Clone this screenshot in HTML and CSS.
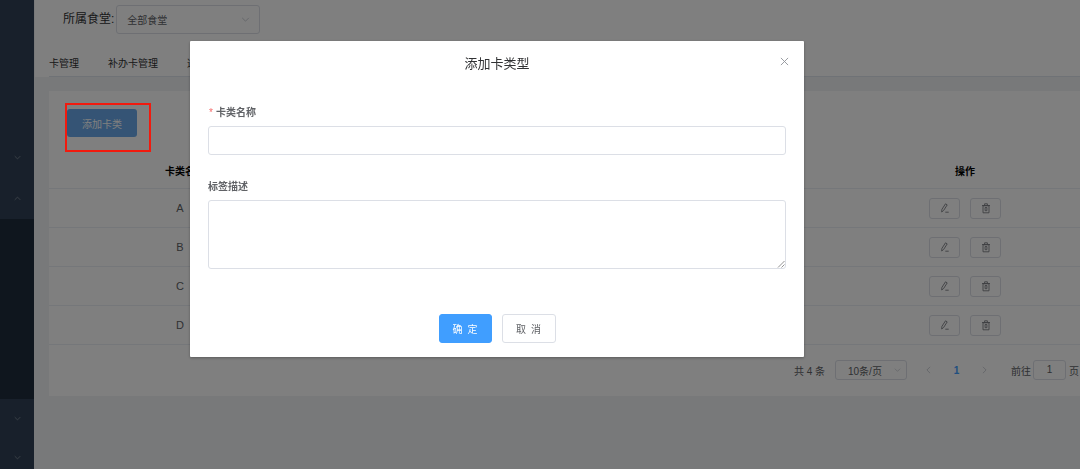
FILE: index.html
```html
<!DOCTYPE html>
<html lang="zh-CN">
<head>
<meta charset="utf-8">
<title>添加卡类型</title>
<link rel="stylesheet" href="styles.css">
</head>
<body>
<div class="app">
  <aside class="sidebar">
    <div class="menu-item tall"><svg class="chev" viewBox="0 0 10 6"><path d="M1 1l4 4 4-4"/></svg></div>
    <div class="menu-item tall"><svg class="chev" viewBox="0 0 10 6"><path d="M1 5l4-4 4 4"/></svg></div>
    <div class="submenu"></div>
    <div class="menu-item"><svg class="chev" viewBox="0 0 10 6"><path d="M1 1l4 4 4-4"/></svg></div>
    <div class="menu-item"><svg class="chev" viewBox="0 0 10 6"><path d="M1 1l4 4 4-4"/></svg></div>
  </aside>
  <main class="main">
    <div class="filter">
      <span class="filter-label">所属食堂:</span>
      <div class="select filter-select"><span>全部食堂</span><svg class="chev-sm" viewBox="0 0 10 6"><path d="M1 1l4 4 4-4"/></svg></div>
    </div>
    <div class="tabs-wrap">
      <nav class="tabs">
        <span class="tab">卡管理</span>
        <span class="tab">补办卡管理</span>
        <span class="tab">适用范围</span>
      </nav>
    </div>
    <section class="card">
      <div class="toolbar"><button class="btn-add">添加卡类</button></div>
      <div class="row head"><div>卡类名</div><div></div><div>操作</div></div>
      <div class="row"><div>A</div><div></div><div class="ops">
        <span class="op"><svg viewBox="0 0 12 12"><path d="M2.700 10l.2-2.600 3.600-5.600 1.700 1.100-3.600 5.600zM6.300 10.200h3.400"/></svg></span>
        <span class="op"><svg viewBox="0 0 12 12"><path d="M3 3.800h6v7H3zM2 3.500h8M4.600 3.500V1.800h2.800v1.700M5.100 5.500h1.800v3.200H5.100z"/></svg></span>
      </div></div>
      <div class="row"><div>B</div><div></div><div class="ops">
        <span class="op"><svg viewBox="0 0 12 12"><path d="M2.700 10l.2-2.600 3.600-5.600 1.700 1.100-3.600 5.600zM6.300 10.200h3.400"/></svg></span>
        <span class="op"><svg viewBox="0 0 12 12"><path d="M3 3.800h6v7H3zM2 3.500h8M4.600 3.500V1.800h2.800v1.700M5.100 5.500h1.800v3.200H5.100z"/></svg></span>
      </div></div>
      <div class="row"><div>C</div><div></div><div class="ops">
        <span class="op"><svg viewBox="0 0 12 12"><path d="M2.700 10l.2-2.600 3.600-5.600 1.700 1.100-3.600 5.600zM6.300 10.200h3.400"/></svg></span>
        <span class="op"><svg viewBox="0 0 12 12"><path d="M3 3.800h6v7H3zM2 3.500h8M4.600 3.500V1.800h2.800v1.700M5.100 5.500h1.800v3.200H5.100z"/></svg></span>
      </div></div>
      <div class="row"><div>D</div><div></div><div class="ops">
        <span class="op"><svg viewBox="0 0 12 12"><path d="M2.700 10l.2-2.600 3.600-5.600 1.700 1.100-3.600 5.600zM6.300 10.200h3.400"/></svg></span>
        <span class="op"><svg viewBox="0 0 12 12"><path d="M3 3.800h6v7H3zM2 3.500h8M4.600 3.500V1.800h2.800v1.700M5.100 5.500h1.800v3.200H5.100z"/></svg></span>
      </div></div>
      <div class="pager">
        <span class="total">共 4 条</span>
        <div class="select size-select"><span>10条/页</span><svg class="chev-sm" viewBox="0 0 10 6"><path d="M1 1l4 4 4-4"/></svg></div>
        <svg class="arrow" viewBox="0 0 6 10"><path d="M5 1L1 5l4 4"/></svg>
        <span class="page-num">1</span>
        <svg class="arrow" viewBox="0 0 6 10"><path d="M1 1l4 4-4 4"/></svg>
        <span class="goto">前往</span>
        <span class="goto-input">1</span>
        <span class="goto-end">页</span>
      </div>
    </section>
  </main>
</div>

<div class="overlay"></div>
<div class="annotation"></div>

<div class="dialog">
  <header class="dialog-head">
    <span class="dialog-title">添加卡类型</span>
    <svg class="close" viewBox="0 0 10 10"><path d="M1 1l8 8M9 1L1 9"/></svg>
  </header>
  <form class="dialog-body">
    <label class="label"><span class="star">*</span>卡类名称</label>
    <div class="input"></div>
    <label class="label second">标签描述</label>
    <div class="textarea">
      <svg class="grip" viewBox="0 0 8 8"><path d="M1 7.500L7.500 1M4.500 7.500l3-3"/></svg>
    </div>
  </form>
  <footer class="dialog-foot">
    <button class="btn primary">确 定</button>
    <button class="btn plain">取 消</button>
  </footer>
</div>
</body>
</html>
```

FILE: styles.css
```css
* { box-sizing: border-box; }
html, body { margin: 0; height: 100%; overflow: hidden; }
body {
  font-family: "Liberation Sans", "Noto Sans CJK SC", sans-serif;
  font-size: 10px;
  color: #606266;
  background: #f0f2f5;
}
.app { display: flex; height: 469px; }

.sidebar {
  width: 34px;
  flex: none;
  background: #304156;
  padding-top: 137px;
  display: flex;
  flex-direction: column;
  overflow: hidden;
}
.menu-item { height: 39px; flex: none; display: flex; align-items: center; justify-content: center; }
.menu-item.tall { height: 41px; }
.submenu { height: 180px; flex: none; background: #1f2d3d; }
.chev { width: 7px; height: 5px; fill: none; stroke: #8f98a3; stroke-width: 1; }

.main { flex: 1; min-width: 0; margin-left: 1px; }
.filter {
  height: 40px;
  background: #fff;
  display: flex;
  align-items: flex-start;
  padding: 5px 0 0 28px;
  gap: 2px;
}
.filter-label { font-size: 12px; line-height: 29px; color: #303133; }
.select {
  display: flex;
  align-items: center;
  justify-content: space-between;
  border: 1px solid #dcdfe6;
  border-radius: 3px;
  color: #606266;
  background: #fff;
}
.filter-select { width: 144px; height: 29px; padding: 0 9px 0 10px; }
.chev-sm { width: 9px; height: 5px; fill: none; stroke: #c0c4cc; stroke-width: 1; }

.tabs-wrap { background: #fff; padding-left: 14px; }
.tabs {
  height: 37px;
  display: flex;
  gap: 29px;
  padding-top: 15px;
  line-height: 17px;
  color: #303133;
  border-bottom: 1px solid #dfe4ed;
}
.tab { white-space: nowrap; }

.card { margin: 14px 0 0 14px; height: 305px; background: #fff; }
.toolbar { height: 60px; padding: 18px 0 0 18px; }
.btn-add {
  display: block;
  width: 70px;
  height: 28px;
  border: 0;
  border-radius: 3px;
  background: #6aa9ea;
  color: #fff;
  font: inherit;
  padding: 0;
}
.row {
  display: grid;
  grid-template-columns: 262px 1fr 230px;
  height: 39px;
  align-items: center;
  text-align: center;
  border-bottom: 1px solid #ebeef5;
}
.row > div { font-size: 11px; }
.row.head { height: 38px; padding-top: 2px; color: #000; font-weight: 700; }
.row.head > div { font-size: 10px; }
.ops { display: flex; justify-content: center; gap: 10px; }
.op {
  width: 31px;
  height: 21px;
  border: 1px solid #dcdfe6;
  border-radius: 3px;
  display: flex;
  align-items: center;
  justify-content: center;
}
.op svg { width: 12px; height: 12px; fill: none; stroke: #7d7f85; stroke-width: .9; }

.pager { display: flex; align-items: center; padding: 15px 0 0 745px; height: 35px; }
.total { width: 41px; white-space: nowrap; }
.size-select { width: 72px; height: 20px; padding: 0 5px 0 12px; }
.size-select .chev-sm { width: 7px; height: 4px; }
.arrow { width: 5px; height: 8px; fill: none; stroke: #c0c4cc; stroke-width: 1; }
.size-select + .arrow { margin-left: 19px; }
.page-num { width: 51px; text-align: center; color: #409eff; font-weight: 700; }
.goto { margin-left: 24px; white-space: nowrap; }
.goto-input {
  width: 33px;
  height: 20px;
  margin-left: 2px;
  border: 1px solid #dcdfe6;
  border-radius: 3px;
  text-align: center;
  line-height: 18px;
}
.goto-end { margin-left: 3px; }

.overlay { position: fixed; inset: 0; background: rgba(0, 0, 0, .5); }
.annotation {
  position: fixed;
  left: 65px;
  top: 103px;
  width: 86px;
  height: 49px;
  border: 2px solid #f21a0e;
}

.dialog {
  position: fixed;
  left: 190px;
  top: 41px;
  width: 614px;
  height: 316px;
  background: #fff;
  border-radius: 1px;
  box-shadow: 0 1px 3px rgba(0, 0, 0, .3);
}
.dialog-head { height: 44px; position: relative; text-align: center; padding-top: 14px; }
.dialog-title { font-size: 13px; line-height: 18px; color: #303133; display: block; }
.close {
  position: absolute;
  right: 15px;
  top: 16px;
  width: 9px;
  height: 9px;
  fill: none;
  stroke: #909399;
  stroke-width: 1;
}
.dialog-body { padding: 20px 18px 0; }
.label { display: block; height: 21px; line-height: 15px; color: #606266; font-weight: 700; font-size: 10px; }
.star { color: #f56c6c; margin: 0 3px 0 1px; font-weight: 400; }
.input { height: 29px; border: 1px solid #dcdfe6; border-radius: 3px; }
.label.second { height: 15px; margin-top: 24px; margin-bottom: 6px; }
.textarea { height: 69px; border: 1px solid #dcdfe6; border-radius: 3px; position: relative; }
.grip { position: absolute; right: 0; bottom: 0; width: 8px; height: 8px; fill: none; stroke: #777; stroke-width: .8; }
.dialog-foot { display: flex; justify-content: center; gap: 10px; margin-top: 45px; padding-left: 1px; }
.btn { height: 29px; border-radius: 3px; font: inherit; padding: 0; letter-spacing: 1px; }
.primary { width: 53px; background: #409eff; border: 1px solid #409eff; color: #fff; }
.plain { width: 54px; background: #fff; border: 1px solid #dcdfe6; color: #606266; }
```
